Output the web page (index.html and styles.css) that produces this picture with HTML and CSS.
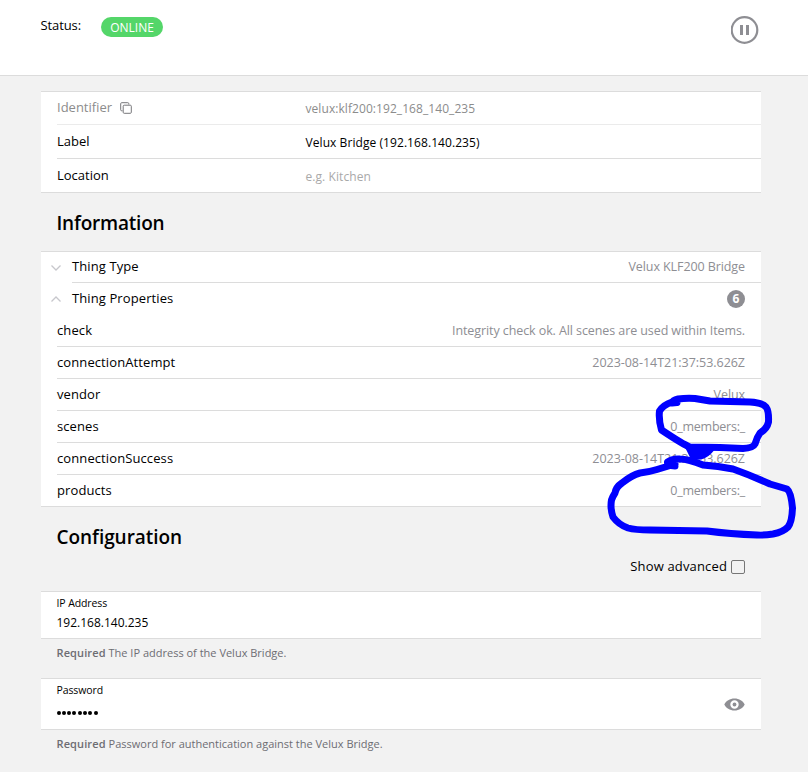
FILE: index.html
```html
<!DOCTYPE html>
<html lang="en">
<head>
<meta charset="utf-8">
<title>Velux Bridge</title>
<link rel="stylesheet" href="styles.css">
</head>
<body>
<header class="status-bar">
  <span class="status-label">Status:</span>
  <span class="chip">ONLINE</span>
  <svg class="pause" width="28" height="28" viewBox="0 0 28 28"><circle cx="13.500" cy="14" r="12.8" fill="none" stroke="#8e8e93" stroke-width="2.2"/><path d="M9 9h3v10h-3zM15 9h3v10h-3z" fill="#8e8e93"/></svg>
</header>
<main class="page">
  <section class="card form">
    <div class="form-row disabled">
      <span class="form-name"><span>Identifier</span><svg class="copy" width="12" height="12" viewBox="0 0 12 12" fill="none" stroke="#77777b" stroke-width="1"><rect x="3.2" y="3.2" width="8.1" height="8.1" rx="1"/><path d="M2.5 8.8H1.7Q.7 8.8.7 7.8V1.7Q.7.7 1.7.7H7.8Q8.8.7 8.8 1.7V2.5"/></svg></span>
      <span class="form-value">velux:klf200:192_168_140_235</span>
    </div>
    <div class="form-row">
      <span class="form-name">Label</span>
      <span class="form-value">Velux Bridge (192.168.140.235)</span>
    </div>
    <div class="form-row">
      <span class="form-name">Location</span>
      <span class="form-value placeholder">e.g. Kitchen</span>
    </div>
  </section>
  <h2 class="info-title">Information</h2>
  <section class="card list">
    <div class="row toggle">
      <svg class="chevron" width="10" height="6" viewBox="0 0 10 6"><path d="M.5.5 5 5 9.5.5"/></svg>
      <div class="row-body lined"><span class="name">Thing Type</span><span class="after">Velux KLF200 Bridge</span></div>
    </div>
    <div class="row toggle">
      <svg class="chevron" width="10" height="6" viewBox="0 0 10 6"><path d="M.5 5.5 5 1 9.5 5.5"/></svg>
      <div class="row-body"><span class="name">Thing Properties</span><span class="badge">6</span></div>
    </div>
    <div class="row"><div class="row-body lined"><span class="name">check</span><span class="after">Integrity check ok. All scenes are used within Items.</span></div></div>
    <div class="row"><div class="row-body lined"><span class="name">connectionAttempt</span><span class="after date">2023-08-14T21:37:53.626Z</span></div></div>
    <div class="row"><div class="row-body lined"><span class="name">vendor</span><span class="after">Velux</span></div></div>
    <div class="row"><div class="row-body lined"><span class="name">scenes</span><span class="after members">0_members:_</span></div></div>
    <div class="row"><div class="row-body lined"><span class="name">connectionSuccess</span><span class="after date">2023-08-14T21:37:53.626Z</span></div></div>
    <div class="row"><div class="row-body"><span class="name">products</span><span class="after members">0_members:_</span></div></div>
  </section>
  <h2 class="config-title">Configuration</h2>
  <div class="advanced"><span>Show advanced</span><span class="checkbox"></span></div>
  <section class="card field">
    <span class="field-label">IP Address</span>
    <span class="field-value">192.168.140.235</span>
  </section>
  <p class="hint"><b>Required</b> The IP address of the Velux Bridge.</p>
  <section class="card field password">
    <div class="field-text">
      <span class="field-label">Password</span>
      <span class="dots"><i></i><i></i><i></i><i></i><i></i><i></i><i></i><i></i></span>
    </div>
    <svg class="eye" width="21" height="13" viewBox="0 0 21 13"><path fill="#8e8e93" fill-rule="evenodd" d="M10.5.5C5.8.5 2 3 .3 6.5 2 10 5.8 12.5 10.5 12.5S19 10 20.7 6.5C19 3 15.200.5 10.500.5zM10.500 2.300a4.200 4.200 0 1 1 0 8.400 4.200 4.200 0 0 1 0-8.400z"/><circle cx="10.500" cy="6.500" r="1.900" fill="#8e8e93"/></svg>
  </section>
  <p class="hint"><b>Required</b> Password for authentication against the Velux Bridge.</p>
</main>
<svg class="ink" width="808" height="772" viewBox="0 0 808 772">
  <path d="M677 402.500 672 403Q673 400 678 399Q686 398 695 398.500L710 401 750 402Q762 402.500 766 407Q769 411 768.500 422Q767 429 760 433Q757 437 755 444Q753 448 743 448.500L720 447.500 690 447Q684 445 661.500 430Q658.500 420 659.500 411Q663 405 672 402"/>
  <path d="M675 466Q667 466 667.500 462Q672 458.500 680 459Q688 459 703 465Q718 466 733 469Q750 475 770 484L787 489Q791 492 792.500 508Q792 522 788 527Q783 532 773 534Q764 535.500 757 535Q730 534 707 531L650 530Q635 530 628 528Q619 525 613 517Q610 508 611.500 500Q613 496 615 493Q616 487 622 483Q632 475 640 473Q649 472 657 469.500L675 464"/>
  <path class="blob" d="M686 447 714 449Q708 457 701 458.500L692 459Z"/>
</svg>
</body>
</html>
```
FILE: styles.css
```css
* { box-sizing: border-box; }
body {
  margin: 0;
  width: 808px;
  height: 772px;
  overflow: hidden;
  position: relative;
  background: #f2f2f2;
  color: #000;
  font-family: "Open Sans", "Noto Sans", sans-serif;
  font-size: 13px;
  line-height: 20px;
}
span { white-space: nowrap; }
svg { flex: none; display: block; }
.status-bar {
  height: 76px;
  padding: 15px 49px 0 40.5px;
  display: flex;
  align-items: flex-start;
  background: #fff;
  border-bottom: 1px solid #dcdcdc;
}
.status-label { width: 60.5px; letter-spacing: -0.1px; }
.chip {
  height: 20px;
  width: 62px;
  margin-top: 2px;
  border-radius: 10px;
  background: #54d669;
  color: #fff;
  font-size: 12px;
  line-height: 21px;
  text-align: center;
}
.pause { margin: 1px 0 0 auto; }
.page { width: 720px; margin: 15px 0 0 41px; }
.card {
  background: #fff;
  border-top: 1px solid #dcdcdc;
  border-bottom: 1px solid #dcdcdc;
}
.form { height: 102px; padding-left: 16px; }
.form-row {
  height: 34px;
  display: flex;
  align-items: center;
  border-bottom: 1px solid #dcdcdc;
}
.form-row:first-child { height: 33px; }
.form-row:last-child { height: 33px; border: 0; }
.disabled { border-color: #ebebeb; }
.disabled > span { color: #8c8c8c; }
.form-name { width: 248.5px; padding-bottom: 2px; display: flex; align-items: center; }
.form-value { font-size: 12px; padding-top: 2px; letter-spacing: 0.07px; }
.copy { margin: 2px 0 0 8px; }
.placeholder { color: #a9a9a9; }
h2 { margin: 0; padding-left: 15.5px; font-size: 19px; line-height: 28px; font-weight: 600; }
.info-title { height: 58px; padding-top: 16px; letter-spacing: -0.2px; }
.config-title { height: 45px; padding-top: 16px; letter-spacing: -0.05px; }
.list { height: 256px; }
.row { display: flex; height: 32px; padding-left: 16px; }
.row:first-child { height: 31px; }
.row:last-child { height: 31px; }
.name { padding-bottom: 2px; letter-spacing: 0.1px; }
.toggle { padding-left: 10px; align-items: center; }
.chevron { margin-right: 11px; fill: none; stroke: #c7c7cc; stroke-width: 1.3; }
.row-body {
  flex: 1;
  height: 100%;
  padding-right: 16px;
  display: flex;
  align-items: center;
  justify-content: space-between;
}
.lined { border-bottom: 1px solid #dcdcdc; }
.after { color: #8e8e93; font-size: 12.5px; letter-spacing: -0.09px; }
.date { letter-spacing: -0.03px; }
.members { letter-spacing: -0.23px; }
.badge {
  width: 18px;
  height: 18px;
  border-radius: 9px;
  background: #8e8e93;
  color: #fff;
  font-size: 12px;
  font-weight: 700;
  line-height: 18px;
  text-align: center;
}
.advanced {
  height: 39px;
  padding: 4px 16px 0 0;
  display: flex;
  justify-content: flex-end;
  align-items: flex-start;
  letter-spacing: 0.15px;
}
.checkbox { width: 14px; height: 14px; margin: 4px 0 0 4px; border: 1px solid #767676; border-radius: 2px; }
.field { height: 48px; padding: 3px 16px 0 15.5px; display: flex; flex-direction: column; }
.field-label { font-size: 10.5px; line-height: 16px; letter-spacing: -0.1px; }
.field-value { font-size: 12px; line-height: 24px; }
.hint { margin: 0; height: 39px; padding: 4px 16px 0 15.5px; font-size: 11px; color: #6d6d72; white-space: nowrap; }
.hint b { font-weight: 600; letter-spacing: 0.12px; }
.password { height: 52px; flex-direction: row; justify-content: space-between; }
.field-text { display: flex; flex-direction: column; }
.dots { display: flex; gap: 1.3px; margin-top: 13px; }
.dots i { width: 4px; height: 4px; border-radius: 2px; background: #000; }
.eye { margin-top: 15.5px; }
.ink { position: absolute; left: 0; top: 0; fill: none; stroke: #00f; stroke-width: 7; stroke-linecap: round; stroke-linejoin: round; }
.blob { fill: #00f; stroke-width: 2; }
```
